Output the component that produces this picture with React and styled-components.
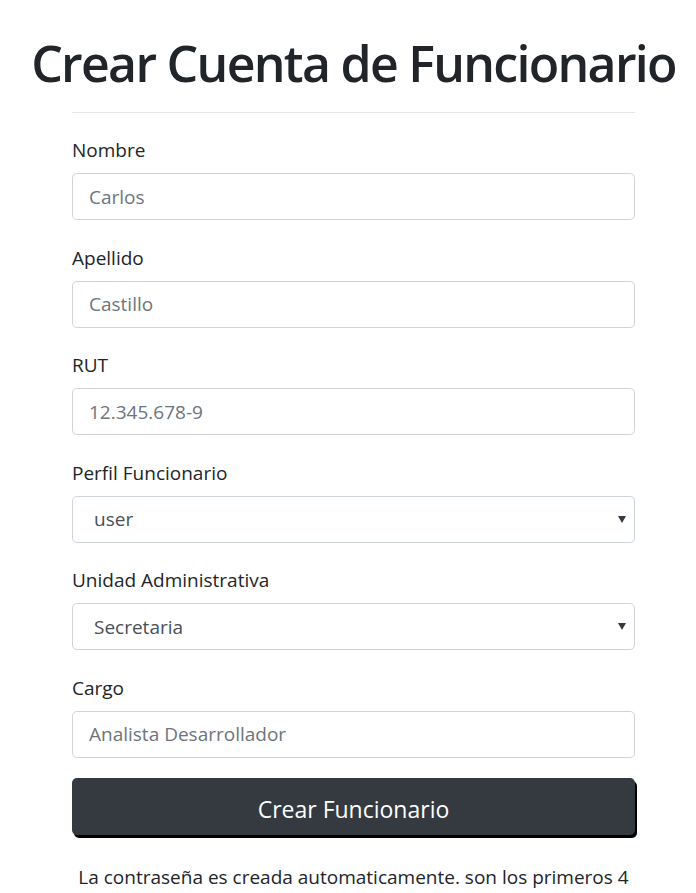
import React from 'react';
import styled, { createGlobalStyle } from 'styled-components';

const GlobalStyle = createGlobalStyle`
  html, body {
    margin: 0;
    padding: 0;
    background: #fff;
  }
  body {
    font-family: "Open Sans", "Noto Sans", sans-serif;
    color: #212529;
    overflow: hidden;
  }
`;

const Page = styled.div`
  width: 563px;
  margin-left: 72px;
  padding-top: 33px;
`;

const Title = styled.h1`
  margin: 0 -80px;
  text-align: center;
  font-size: 50px;
  font-weight: 600;
  line-height: 1.2;
  letter-spacing: -1.7px;
  color: #212529;
`;

const Rule = styled.hr`
  margin: 19px 0 22px;
  border: 0;
  border-top: 1px solid #e5e7ea;
`;

const Group = styled.div`
  display: flex;
  flex-direction: column;
  margin-bottom: 22.6px;
`;

const Label = styled.label`
  font-size: 19px;
  line-height: 30px;
  margin-bottom: 8px;
  color: #212529;
`;

const Input = styled.input`
  box-sizing: border-box;
  height: 47px;
  width: 100%;
  padding: 0 16px;
  font-family: inherit;
  font-size: 19px;
  color: #495057;
  border: 1px solid #ced4da;
  border-radius: 4.8px;
  background: #fff;
  outline: none;
  &::placeholder {
    color: #6c757d;
    opacity: 1;
  }
`;

const SelectWrap = styled.div`
  position: relative;
`;

const Select = styled.select`
  box-sizing: border-box;
  appearance: none;
  height: 47px;
  width: 100%;
  padding: 0 32px 0 21px;
  font-family: inherit;
  font-size: 19px;
  color: #495057;
  border: 1px solid #ced4da;
  border-radius: 4.8px;
  background: #fff;
  outline: none;
`;

const Caret = styled.svg`
  position: absolute;
  right: 9px;
  top: 20px;
  pointer-events: none;
`;

const Button = styled.button`
  display: block;
  box-sizing: border-box;
  width: 100%;
  height: 57px;
  margin-top: -2.6px;
  padding: 6px 0 0;
  border: 0;
  border-radius: 5px;
  background: #343a40;
  color: #fff;
  font-family: inherit;
  font-size: 23px;
  box-shadow: 2px 3px 0 #000;
  cursor: pointer;
`;

const Note = styled.p`
  margin: 27px -20px 0;
  text-align: center;
  font-size: 19px;
  line-height: 30px;
  color: #212529;
`;

const TextField = ({ label, placeholder }) => (
  <Group>
    <Label>{label}</Label>
    <Input placeholder={placeholder} />
  </Group>
);

const SelectField = ({ label, options }) => (
  <Group>
    <Label>{label}</Label>
    <SelectWrap>
      <Select defaultValue={options[0]}>
        {options.map(o => (
          <option key={o}>{o}</option>
        ))}
      </Select>
      <Caret width="8" height="7" viewBox="0 0 8 7">
        <path d="M0 0h8L4 7z" fill="#343a40" />
      </Caret>
    </SelectWrap>
  </Group>
);

export default function App() {
  return (
    <>
      <GlobalStyle />
      <Page>
        <Title>Crear Cuenta de Funcionario</Title>
        <Rule />
        <form onSubmit={e => e.preventDefault()}>
          <TextField label="Nombre" placeholder="Carlos" />
          <TextField label="Apellido" placeholder="Castillo" />
          <TextField label="RUT" placeholder="12.345.678-9" />
          <SelectField label="Perfil Funcionario" options={['user', 'admin']} />
          <SelectField label="Unidad Administrativa" options={['Secretaria', 'Finanzas']} />
          <TextField label="Cargo" placeholder="Analista Desarrollador" />
          <Button type="submit">Crear Funcionario</Button>
        </form>
        <Note>La contraseña es creada automaticamente. son los primeros 4 caracteres del RUT</Note>
      </Page>
    </>
  );
}
